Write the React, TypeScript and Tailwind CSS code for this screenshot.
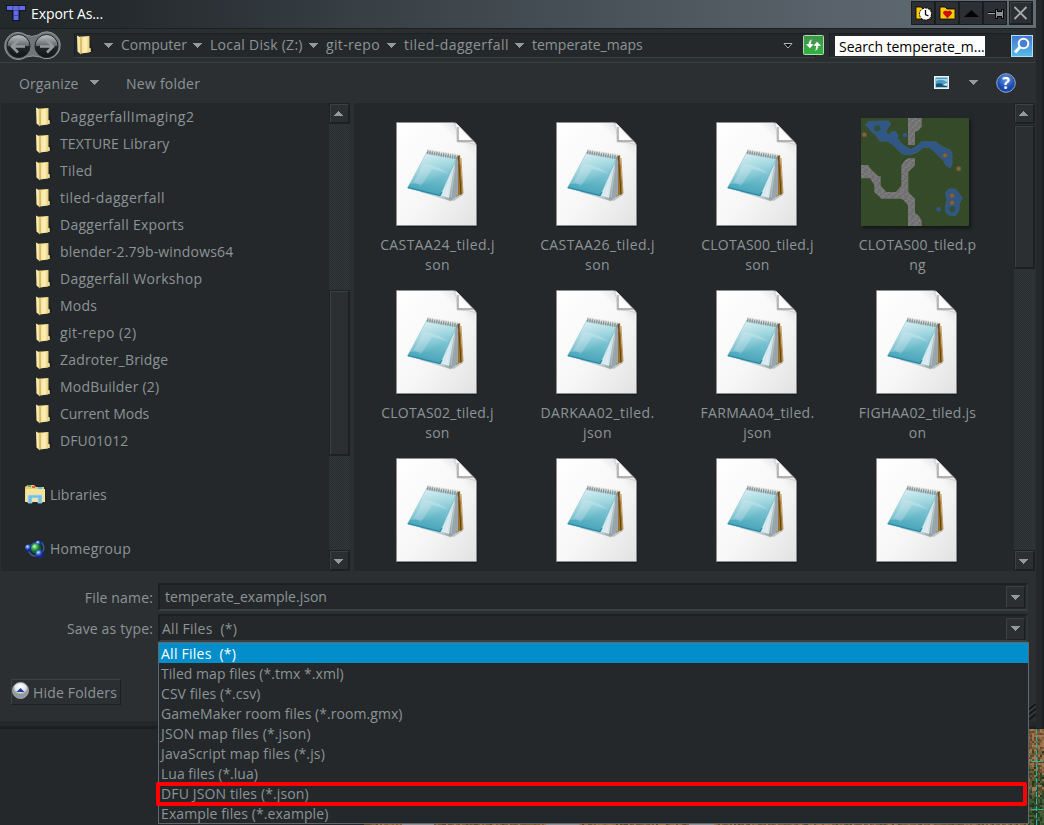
import React from "react";

const folders = [
  ["DaggerfallImaging2", "tracking-[0.45px]"], ["TEXTURE Library", "tracking-[0.15px]"], ["Tiled", "tracking-[0.3px]"],
  ["tiled-daggerfall", "tracking-[0.45px]"], ["Daggerfall Exports", "tracking-[0.27px]"], ["blender-2.79b-windows64", "tracking-[0.17px]"],
  ["Daggerfall Workshop", "tracking-[0.3px]"], ["Mods", "tracking-[0.2px]"], ["git-repo (2)", "tracking-[0.45px]"],
  ["Zadroter_Bridge", "tracking-[0.19px]"], ["ModBuilder (2)", "tracking-[0.22px]"], ["Current Mods", "tracking-[-0.08px]"],
  ["DFU01012", "tracking-[0.1px]"],
];

const files: [string, string, string, boolean?][] = [
  ["CASTAA24_tiled.j", "son", "tracking-[0.38px]"], ["CASTAA26_tiled.j", "son", "tracking-[0.38px]"],
  ["CLOTAS00_tiled.j", "son", "tracking-[0.2px]"], ["CLOTAS00_tiled.p", "ng", "tracking-[0.2px]", true],
  ["CLOTAS02_tiled.j", "son", "tracking-[0.2px]"], ["DARKAA02_tiled.", "json", "tracking-[0.4px]"],
  ["FARMAA04_tiled.", "json", "tracking-[0.3px]"], ["FIGHAA02_tiled.js", "on", "tracking-[0.2px]"],
  ["", "", ""], ["", "", ""], ["", "", ""], ["", "", ""],
];

const types = [
  ["All Files  (*)", "tracking-[0.25px]"], ["Tiled map files (*.tmx *.xml)", "tracking-[0.04px]"], ["CSV files (*.csv)", "tracking-[0.06px]"],
  ["GameMaker room files (*.room.gmx)", "tracking-[0.06px]"], ["JSON map files (*.json)", "tracking-[0.15px]"],
  ["JavaScript map files (*.js)", "tracking-[0.15px]"], ["Lua files (*.lua)", "tracking-[0px]"],
  ["DFU JSON tiles (*.json)", "tracking-[0.13px]"], ["Example files (*.example)", "tracking-[0.1px]"],
];

function Arrow({ up = false, className = "" }: { up?: boolean; className?: string }) {
  return (
    <svg width="9" height="5" viewBox="0 0 9 5" className={`shrink-0 ${className}`} shapeRendering="crispEdges">
      <path d={up ? "M0 5L4.5 0L9 5Z" : "M0 0L4.5 5L9 0Z"} fill="#929a9d" />
    </svg>
  );
}

function Folder() {
  return (
    <svg width="18" height="20" viewBox="0 0 18 20" className="shrink-0">
      <defs>
        <linearGradient id="fold" x1="0" x2="1">
          <stop offset="0" stopColor="#f3e09a" />
          <stop offset=".5" stopColor="#fdf0b8" />
          <stop offset="1" stopColor="#dcbf66" />
        </linearGradient>
      </defs>
      <path d="M14 5l3 10-2 2z" fill="#15181a" opacity=".6" />
      <path d="M4 1.500L13 1V17.500L5 18z" fill="#dcbd64" />
      <path d="M1 .5L5 2.500V19.500L1.500 16.500z" fill="url(#fold)" />
      <path d="M5 2.500L13.500 1v12h1V17L5.500 18.500z" fill="url(#fold)" />
      <path d="M5.200 2.500V19" stroke="#c3a452" strokeWidth=".8" />
      <path d="M14 13.500V17" stroke="#fff3b0" />
    </svg>
  );
}

function FileIcon() {
  return (
    <svg width="82" height="106" viewBox="0 0 82 106" className="block">
      <defs>
        <linearGradient id="page" x1="0" y1="0" x2="1" y2="1">
          <stop offset="0" stopColor="#ffffff" /><stop offset=".55" stopColor="#f7f7f7" /><stop offset="1" stopColor="#e2e2e2" />
        </linearGradient>
        <linearGradient id="pad" x1=".7" y1="0" x2=".45" y2="1">
          <stop offset="0" stopColor="#a9dce4" /><stop offset=".5" stopColor="#76c2d0" /><stop offset="1" stopColor="#43a1b7" />
        </linearGradient>
        <linearGradient id="padlight" x1="0" y1="0" x2=".7" y2=".8">
          <stop offset="0" stopColor="#fff" stopOpacity=".75" /><stop offset="1" stopColor="#fff" stopOpacity="0" />
        </linearGradient>
        <linearGradient id="paper" x1="0" y1="0" x2="1" y2=".5">
          <stop offset="0" stopColor="#c8dce2" /><stop offset=".65" stopColor="#edf6f8" /><stop offset="1" stopColor="#94a3a8" />
        </linearGradient>
        <linearGradient id="curlshade" x1=".95" y1=".05" x2=".5" y2=".55">
          <stop offset="0" stopColor="#8f8f8f" stopOpacity=".5" /><stop offset="1" stopColor="#bbb" stopOpacity="0" />
        </linearGradient>
      </defs>
      <path d="M.5 .5H58L81 24V104.500H.5z" fill="#111416" opacity=".6" transform="translate(.5 .8)" />
      <path d="M.5 .5H57Q60 .5 62 3L79 20.500Q80.500 22 80.500 25V103.500H.5z" fill="url(#page)" stroke="#8c9092" strokeWidth=".8" />
      <path d="M44 1H57Q60 1 62 3L79 20.500V36z" fill="url(#curlshade)" />
      <path d="M58.500 1Q61.500 8 61 20Q72 19.500 80 22.500L62 3Q60.500 1 58.500 1z" fill="#f6f6f6" stroke="#b5b5b5" strokeWidth=".6" />
      <path d="M62.500 5V18.500H76z" fill="#fff" />
      <path d="M62 5V19H77" fill="none" stroke="#9c9c9c" strokeWidth="1.300" />
      <path d="M24 70L58 79L68 72L65 69z" fill="#777" opacity=".35" />
      <path d="M61 34L64 33L67 71L60 75z" fill="#9b7130" />
      <path d="M62.500 34L65 73" stroke="#5e431d" />
      <path d="M65 36L67 71" stroke="#c59e5d" />
      <path d="M24 69L52 42L60 34L62 40L55 79z" fill="url(#paper)" stroke="#abb8bc" strokeWidth=".6" />
      <path d="M60 35L62 38L62 73L55 79z" fill="#98a5a9" />
      <path d="M59 36L44 73L53 76z" fill="#dcecf2" />
      <path d="M57 42L52 74M59 45L55 75M54 50L48 73M51 57L46 71" stroke="#c3dbe3" strokeWidth=".5" />
      <path d="M31 30L60.500 36L44 74L11.500 66z" fill="url(#pad)" stroke="#57a9ba" strokeWidth=".5" />
      <path d="M31 30L60 36L49 61L13 62z" fill="url(#padlight)" />
      <path d="M28 42Q42 43 53 52L36 47L25 64L18 60z" fill="#fff" opacity=".2" />
      <path d="M12 65.500L44 73.500L46 70" fill="none" stroke="#2686a2" strokeWidth="1.200" />
      <path d="M31 30L62 35.500" stroke="#8d9393" strokeWidth="4" strokeDasharray="1.500 .8" />
      <path d="M31 28L63 33" stroke="#d0d1cd" strokeWidth="1.300" strokeDasharray="1.500 .8" />
    </svg>
  );
}

function MapThumb() {
  return (
    <svg width="108" height="108" viewBox="0 0 324 324" className="mr-[4px] block shadow-[2px_2px_3px_#121516]">
      <defs>
        <pattern id="grass" width="20" height="20" patternUnits="userSpaceOnUse">
          <rect width="20" height="20" fill="#344a28" />
          <path d="M2 3h5M12 9h6M6 15h4M16 18h3" stroke="#384d2a" strokeWidth="3" />
          <path d="M9 2h5M2 9h4M13 14h5" stroke="#304526" strokeWidth="2" />
        </pattern>
        <pattern id="stone" width="20" height="20" patternUnits="userSpaceOnUse">
          <rect width="20" height="20" fill="#747474" />
          <path d="M2 3h4M13 8h4M5 14h4" stroke="#929292" strokeWidth="3" />
          <path d="M10 3h3M4 9h3M14 15h3" stroke="#5c5c5c" strokeWidth="3" />
        </pattern>
      </defs>
      <rect width="324" height="324" fill="url(#grass)" />
      <g fill="url(#stone)">
        <path d="M141 0H182V26L174 36L162 42V81H141z" />
        <path d="M0 141H21L31 155L43 166L51 174H59V203L76 222H105L121 203V143L132 127L142 121H162V142L142 162V222L162 242V284L174 294L182 308V324H141V262L127 246L121 242H61L40 222V202L27 181H0z" />
      </g>
      <path d="M12 21L24 10L83 9L89 18L80 31L74 43L83 50L91 42L104 41L111 52L110 62L122 77L136 88L151 94L169 84L181 71H223L239 83L256 92L267 95L273 108V140L267 150L254 141L247 127L232 113L219 99L205 89L186 88L171 102L145 111L122 107L101 85L81 70L57 69L43 49L31 41L24 29z" fill="#315786" stroke="#385c75" strokeWidth="3" />
      <circle cx="49" cy="31" r="9" fill="#304e38" /><circle cx="132" cy="51" r="7" fill="#315786" />
      <path d="M254 223L263 213H283L295 228L304 240L295 256L294 276L285 292H266L254 282V260L258 247z" fill="#315786" stroke="#385c75" strokeWidth="3" />
      <circle cx="274" cy="274" r="9" fill="#304e38" /><circle cx="233" cy="274" r="7" fill="#315786" />
      {[[10, 50], [252, 112], [293, 152], [273, 233], [273, 254]].map(([x, y]) => (
        <g key={`${x}-${y}`}><circle cx={x} cy={y} r="8" fill="#61573f" /><circle cx={x} cy={y} r="5" fill="#8f6039" /></g>
      ))}
    </svg>
  );
}

const bevel = "border border-[#1c2022] border-t-[#3c4143] border-l-[#3c4143] bg-[#2b2f32]";

function ScrollBar({ before, thumb }: { before: string; thumb: string }) {
  return (
    <div className="flex w-[21px] shrink-0 flex-col bg-[#292d2f]" style={{ backgroundImage: "repeating-conic-gradient(#33383a 0% 25%, #272c2e 0% 50%)", backgroundSize: "2px 2px" }}>
      <div className="h-[21px] shrink-0 bg-[#1d2123] p-px"><div className={`flex h-[19px] w-[19px] items-center justify-center ${bevel}`}><Arrow up className="mb-px mr-[2px]" /></div></div>
      <div className={`shrink-0 ${before}`} />
      <div className={`shrink-0 bg-[#1d2123] p-px ${thumb}`}><div className={`h-full w-[19px] ${bevel}`} /></div>
      <div className="flex-1" />
      <div className="h-[21px] shrink-0 bg-[#1d2123] p-px"><div className={`flex h-[19px] w-[19px] items-center justify-center ${bevel}`}><Arrow className="mr-[2px] mt-px" /></div></div>
    </div>
  );
}

function TitleBar() {
  return (
    <header className="flex h-[28px] shrink-0 items-start bg-[linear-gradient(90deg,#24292b_0%,#252b2e_12%,#3a4248_38%,#59626a_80%,#626d76_100%)] pl-[6px] pr-[3px] text-[14px] text-white">
      <svg width="20" height="17" viewBox="0 0 20 17" className="mt-[4px] shrink-0">
        <path d="M0 1H20V7H14V17H6V7H0z" fill="#111431" />
        <path d="M1 2H19V6H12.500V16H7.500V6H1z" fill="#636ce0" />
        <path d="M6.800 2V6M12.800 2V6M7 6.500H13M7 11.500H13" stroke="#363c92" strokeWidth=".8" />
      </svg>
      <h1 className="ml-[5px] mt-[1px] flex-1 leading-[26px] tracking-[-0.08px]">Export As...</h1>
      <div className="mt-px flex h-[24px] bg-[#191d1f]">
        {[0, 1, 2, 3].map((n) => (
          <div key={n} className="flex h-[24px] w-[24px] items-center justify-center border border-[#181c1e] bg-[#2c2f34]">
            <svg width="17" height="17" viewBox="0 0 17 17" className="shrink-0">
              {n < 2 && <path d="M1 4V2H6L8 4H16V14H1z" fill="#ffca00" stroke="#000" strokeWidth=".8" />}
              {n === 0 && <g><circle cx="10.500" cy="9" r="6" fill="white" stroke="black" strokeWidth="1" strokeDasharray="2 1" /><path d="M10.500 5V9.500L13.500 11" fill="none" stroke="black" strokeWidth="1.300" /></g>}
              {n === 1 && <path d="M8.500 13L4.500 8.500V7L6 6H8L8.500 7L10 6H11L12.500 7V8.500z" fill="#d90808" stroke="#820000" strokeWidth=".5" />}
              {n === 2 && <path d="M1 12L8.500 5L16 12z" fill="#020405" />}
              {n === 3 && <g shapeRendering="crispEdges"><path d="M1 7H8V9H1z" fill="#000" /><path d="M1 8H8V9H1z" fill="#a5a9ab" /><path d="M8 4H10V6H14V4H16V13H14V11H10V13H8z" fill="#8b9093" stroke="#000" /></g>}
            </svg>
          </div>
        ))}
      </div>
      <div className="ml-[2px] mt-[1px] bg-[#1b1f21] p-px"><div className={`flex h-[22px] w-[22px] items-center justify-center ${bevel}`}>
        <svg width="16" height="16" viewBox="0 0 16 16" className="shrink-0"><path d="M1.500 2L13.500 14M13.500 2L1.500 14" stroke="#a7acae" strokeWidth="1.900" /></svg>
      </div></div>
    </header>
  );
}

function Navigation() {
  return (
    <div className="flex h-[35px] shrink-0 border-y border-[#1c2022] border-b-[#3b4043] bg-[#292e30] pl-px text-[#8c9497]">
      <svg width="60" height="33" viewBox="0 0 60 33" className="mt-px ml-[3px] shrink-0">
        <defs><linearGradient id="nav" x2="0" y2="1"><stop stopColor="#c1c4c5" /><stop offset=".48" stopColor="#636b6f" /><stop offset=".49" stopColor="#252a2c" /><stop offset="1" stopColor="#101415" /></linearGradient></defs>
        <path d="M13 2.500A13.500 13.500 0 1 0 22 27Q29 25 36 27A13.500 13.500 0 1 0 34 5Q28 8 22 5A13 13 0 0 0 13 2.500z" fill="#6f7578" stroke="#93989a" />
        {[14.5, 42.5].map((x) => <circle key={x} cx={x} cy="16" r="11.500" fill="url(#nav)" stroke="#1e2426" />)}
        <path d="M21 16.500H8.500M14 10.500L8 16.500L14 22.500M36 16.500H49M43 10.500L49 16.500L43 22.500" fill="none" stroke="#93999c" strokeWidth="2.600" />
      </svg>
      <div className="ml-[10px] mt-[4px] flex h-[25px] w-[742px] shrink-0 items-center border border-[#1c2022] border-b-[#3b4043] bg-[#24282a] pb-[2px] pl-px">
        <Folder />
        <Arrow className="ml-[10px] mt-[2px]" />
        <span className="ml-[8px] w-[72px] shrink-0">Computer</span><Arrow className="mt-[2px]" />
        <span className="ml-[8px] w-[99px] shrink-0 tracking-[0.27px]">Local Disk (Z:)</span><Arrow className="mt-[2px]" />
        <span className="ml-[8px] w-[61px] shrink-0 tracking-[0.35px]">git-repo</span><Arrow className="mt-[2px]" />
        <span className="ml-[8px] w-[111px] shrink-0 tracking-[0.45px]">tiled-daggerfall</span><Arrow className="mt-[2px]" />
        <span className="ml-[8px] w-[251px] shrink-0">temperate_maps</span>
        <svg width="10" height="6" viewBox="0 0 10 6" className="mt-[2px] shrink-0"><path d="M1 .5H9L5 5z" fill="#080a0b" stroke="#b1b7b9" /></svg>
      </div>
      <svg width="21" height="20" viewBox="0 0 21 20" className="ml-[-13px] mt-[6px] shrink-0">
        <defs><linearGradient id="refresh" x2="0" y2="1"><stop stopColor="#3c9549" /><stop offset="1" stopColor="#2fb53d" /></linearGradient></defs>
        <rect x=".5" y=".5" width="20" height="19" rx="1" fill="url(#refresh)" stroke="#b5d7b8" />
        <path d="M9.500 4Q5.500 5 5.500 9H2.500L7 13.500L11 9H8Q8 6 9.500 4M11.500 16.500Q15.500 15 15.500 11H18.500L14 6.500L10 11H13Q13 14 11.500 16.500" fill="white" stroke="#46744d" strokeWidth=".4" />
      </svg>
      <div className="ml-[5px] mt-[4px] flex h-[25px] w-[182px] shrink-0 items-center border border-[#1c2022] border-b-[#3b4043] bg-[#24282a] pl-[5px]">
        <span className="h-[20px] w-[150px] overflow-hidden whitespace-nowrap bg-white pl-[4px] leading-[22px] tracking-[-0.05px] text-black">Search temperate_m...</span>
      </div>
      <svg width="22" height="22" viewBox="0 0 22 22" className="mt-[6px] shrink-0">
        <defs><linearGradient id="find" x2="0" y2="1"><stop stopColor="#4476d5" /><stop offset="1" stopColor="#55bcea" /></linearGradient></defs>
        <rect x=".5" y=".5" width="21" height="21" fill="url(#find)" stroke="#b6dced" />
        <circle cx="12.500" cy="8.500" r="4.800" fill="#487fd1" stroke="white" strokeWidth="2" /><path d="M9 12L4 17.500" stroke="white" strokeWidth="3" />
      </svg>
    </div>
  );
}

function Toolbar() {
  return (
    <div className="flex h-[40px] shrink-0 items-center pl-[19px] pr-[20px] pt-px">
      <span className="w-[71px] tracking-[0.13px]">Organize</span><Arrow className="mb-[2px]" />
      <span className="ml-[27px] flex-1 tracking-[0.25px]">New folder</span>
      <svg width="15" height="13" viewBox="0 0 15 13" className="mb-[3px]"><rect width="15" height="13" fill="#e8f3f6" /><rect x="1.500" y="1.500" width="12" height="10" fill="#4e9cc6" /><path d="M2 5Q7 2 13 6V3H2z" fill="#a9dcec" /><path d="M2 8Q7 6 13 10V11H2z" fill="#17506b" /><path d="M8 9L13 7V10" fill="#d6eef2" /></svg>
      <Arrow className="mb-[2px] ml-[20px]" />
      <svg width="20" height="20" viewBox="0 0 20 20" className="mb-[2px] ml-[18px]">
        <defs><radialGradient id="help" cy=".3"><stop stopColor="#6798e6" /><stop offset="1" stopColor="#1748ac" /></radialGradient></defs>
        <circle cx="10" cy="10" r="9.300" fill="url(#help)" stroke="#9ca9c9" /><text x="10" y="16" textAnchor="middle" fontSize="16" fontWeight="700" fill="white">?</text>
      </svg>
    </div>
  );
}

function TreePane() {
  return (
    <nav className="flex w-[349px] overflow-hidden bg-[#24282a]">
      <div className="flex-1">
        {folders.map(([label, spacing]) => <div key={label} className="flex h-[27px] items-center pl-[34px]"><Folder /><span className={`ml-[7px] ${spacing}`}>{label}</span></div>)}
        <div className="mt-[27px] flex h-[27px] items-center pl-[24px]">
          <svg width="20" height="19" viewBox="0 0 20 19"><path d="M0 2L3 0H9L11 2H19V17H0z" fill="#e6cd79" /><path d="M1 4H20V17H0z" fill="#f7e49b" /><path d="M3 1h3" stroke="#46b45a" strokeWidth="2" /><path d="M7 2h3" stroke="#dc6256" strokeWidth="2" /><path d="M13 3h4" stroke="#64b6da" strokeWidth="2" /><path d="M3 18V10H17V18H13V13H7V18z" fill="#74bee0" stroke="#b4e4f2" strokeWidth=".7" /></svg>
          <span className="ml-[5px]">Libraries</span>
        </div>
        <div className="mt-[27px] flex h-[27px] items-center pl-[24px]">
          <svg width="20" height="18" viewBox="0 0 20 18"><defs><radialGradient id="ball" cx=".35" cy=".3"><stop stopColor="#cfeaff" /><stop offset=".5" stopColor="#4978e0" /><stop offset="1" stopColor="#112a93" /></radialGradient><radialGradient id="gball" cx=".35" cy=".3"><stop stopColor="#c9ffc2" /><stop offset=".5" stopColor="#46b957" /><stop offset="1" stopColor="#126931" /></radialGradient></defs><path d="M3 9Q9 0 17 3Q22 10 13 16Q5 17 3 9" fill="none" stroke="#365c9f" strokeWidth="1.500" /><circle cx="3.500" cy="8" r="3.500" fill="url(#ball)" /><circle cx="13.500" cy="3.500" r="3" fill="url(#ball)" /><circle cx="11" cy="8.500" r="5" fill="url(#gball)" /><circle cx="14.500" cy="14" r="4" fill="url(#ball)" /></svg>
          <span className="ml-[5px] tracking-[0.28px]">Homegroup</span>
        </div>
      </div>
      <ScrollBar before="h-[166px]" thumb="h-[166px]" />
    </nav>
  );
}

function FilePane() {
  return (
    <main className="flex flex-1 overflow-hidden bg-[#24282a]">
      <div className="grid flex-1 grid-cols-[repeat(4,160px)] auto-rows-[168px] content-start pl-[3px]">
        {files.map(([a, b, spacing, map], i) => (
          <div key={i} className="flex flex-col items-center">
            <div className={`flex h-[132px] shrink-0 justify-center ${map ? "pt-[15px]" : "pt-[19px]"}`}>{map ? <MapThumb /> : <FileIcon />}</div>
            <div className={`pl-px text-center leading-[20px] ${spacing}`}><div>{a}</div><div>{b}</div></div>
          </div>
        ))}
      </div>
      <ScrollBar before="h-px" thumb="h-[144px]" />
    </main>
  );
}

function Combo({ label, value, pad, spacing }: { label: string; value: string; pad: string; spacing: string }) {
  return (
    <div className="flex h-[28px] shrink-0 items-center">
      <label className="w-[153px] shrink-0 pt-px text-right tracking-[0.15px]">{label}</label>
      <div className={`ml-[5px] flex h-[28px] w-[870px] items-center border-2 border-[#1c2022] border-b-[#3b4043] border-r-[#303537] bg-[#24282a] ${pad}`}>
        <span className={`flex-1 whitespace-pre ${spacing}`}>{value}</span>
        <div className={`mr-px flex h-[22px] w-[19px] items-center justify-center ${bevel}`}><Arrow /></div>
      </div>
    </div>
  );
}

const dirt = ["#82603b", "#96704a", "#6e5334", "#a37750", "#7b5a38", "#5c4a2e"];
const leaves = ["#304929", "#3c5a32", "#20361e", "#48603b", "#2a4225", "#5f5230"];

function speckle(x: number, y: number) {
  const noise = Math.sin(x * 127.1 + y * 311.7) * 43758.5453;
  return noise - Math.floor(noise);
}

function Terrain() {
  const cells = [];
  for (let y = 0; y < 96; y += 2) {
    for (let x = 664; x < 680; x += 2) {
      const colors = y > 66 || speckle(x + 9, y + 5) < (y - 18) / 60 ? leaves : dirt;
      cells.push(<rect key={`${x}-${y}`} x={x} y={y} width="2" height="2" fill={colors[Math.floor(speckle(x, y) * 6)]} />);
    }
  }
  for (let x = 0; x < 664; x += 2) {
    cells.push(<rect key={`edge-${x}`} x={x} y="95" width="2" height="1" fill={dirt[Math.floor(speckle(x, 95) * 6)]} />);
  }
  return (
    <svg width="680" height="96" viewBox="0 0 680 96" className="ml-auto shrink-0" shapeRendering="crispEdges">
      {cells}
      <path d="M672.500 0V96M660 32.500H680M660 80.500H680" stroke="#27b9a8" strokeDasharray="5 2" />
      <path d="M38 95.500H70M182 95.500H215M325 95.500H350" stroke="#929292" />
    </svg>
  );
}

function TypeMenu() {
  return (
    <div className="absolute left-[158px] top-[642px] z-10 h-[182px] w-[871px] border border-[#61696e] bg-[#24282a]">
      {types.map(([type, spacing], index) => (
        <div key={type} className={`h-[20px] whitespace-pre pl-[2px] leading-[21px] ${spacing} ${index === 0 ? "bg-[#028dcb] text-white" : ""}`}>{type}</div>
      ))}
      <div className="absolute left-[-3px] top-[139px] h-[24px] w-[871px] rounded-[2px] border-4 border-[#fe0000]" />
    </div>
  );
}

export default function App() {
  return (
    <div className="relative h-[825px] w-[1044px] overflow-hidden bg-[#24282a] font-['Open_Sans',sans-serif] text-[14px] leading-[20px] text-[#8c9497]">
      <div className="flex h-[729px] border-b border-[#1b1f21]">
        <div className="flex w-[1036px] flex-col bg-[#2b2f32]">
          <TitleBar />
          <Navigation />
          <Toolbar />
          <div className="flex h-[468px] shrink-0 gap-[4px] pl-px pr-px"><TreePane /><FilePane /></div>
          <div className="flex h-[150px] shrink-0 flex-col pt-[12px]">
            <Combo label="File name:" value="temperate_example.json" pad="pl-[5px]" spacing="tracking-[0.02px]" />
            <div className="h-[3px] shrink-0" />
            <Combo label="Save as type:" value="All Files  (*)" pad="pl-[2px] pt-px" spacing="tracking-[0.25px]" />
            <div className="mt-[37px] flex h-[42px] shrink-0 items-start justify-between pl-[11px]">
              <button className="flex h-[26px] w-[110px] items-center border border-[#1c2022] border-t-[#3c4143] border-l-[#3c4143]">
                <svg width="18" height="20" viewBox="0 0 18 20" className="shrink-0"><defs><radialGradient id="hide" cy=".25"><stop stopColor="#fff" /><stop offset=".7" stopColor="#e1e4e5" /><stop offset="1" stopColor="#92999c" /></radialGradient></defs><circle cx="8.500" cy="8.500" r="8" fill="url(#hide)" stroke="#9ea6b2" /><path d="M4.500 10L8.500 6L12.500 10z" fill="#19439d" /></svg>
                <span className="ml-[3px] whitespace-nowrap pt-px tracking-[0.18px]">Hide Folders</span>
              </button>
              <svg width="9" height="17" viewBox="0 0 9 17" className="mt-[25px]"><path d="M0 7L9 0M0 12L9 5M0 17L9 10" stroke="#14181a" strokeWidth="2" /><path d="M0 9L9 2M0 14L9 7" stroke="#3f4548" /></svg>
            </div>
          </div>
          <div className="h-[7px] shrink-0 border-b-2 border-[#1c2022] bg-[#24282a]" />
        </div>
        <div className="w-[6px] bg-[#24282a]" />
        <div className="w-[2px] bg-[#1b1f21]" />
      </div>
      <div className="flex h-[96px]"><Terrain /></div>
      <TypeMenu />
    </div>
  );
}
